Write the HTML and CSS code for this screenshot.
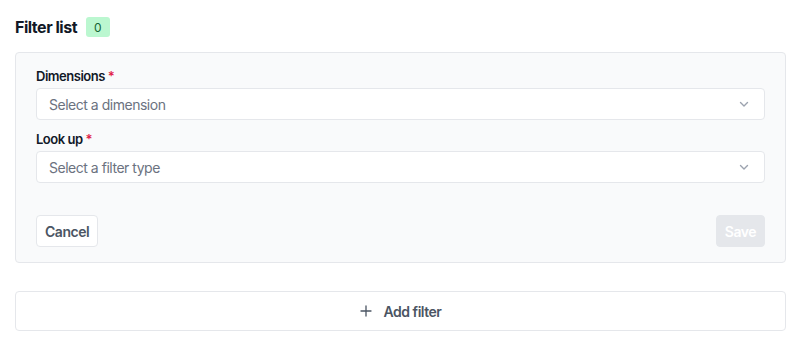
FILE: index.html
```html
<!DOCTYPE html>
<html>
<head>
<meta charset="utf-8">
<link rel="stylesheet" href="styles.css">
</head>
<body>
<div class="page">
  <div class="header">
    <h2 class="title">Filter list</h2>
    <span class="badge">0</span>
  </div>
  <div class="panel">
    <div class="field">
      <label class="label">Dimensions <span class="req">*</span></label>
      <div class="select">
        <span class="placeholder">Select a dimension</span>
        <svg class="chev" width="12" height="12" viewBox="0 0 12 12"><path d="M2.5 4.5 L6 8 L9.5 4.5" fill="none" stroke="#9ca3af" stroke-width="1.4" stroke-linecap="round" stroke-linejoin="round"/></svg>
      </div>
    </div>
    <div class="field">
      <label class="label">Look up <span class="req">*</span></label>
      <div class="select">
        <span class="placeholder">Select a filter type</span>
        <svg class="chev" width="12" height="12" viewBox="0 0 12 12"><path d="M2.5 4.5 L6 8 L9.5 4.5" fill="none" stroke="#9ca3af" stroke-width="1.4" stroke-linecap="round" stroke-linejoin="round"/></svg>
      </div>
    </div>
    <div class="actions">
      <button class="btn cancel">Cancel</button>
      <button class="btn save">Save</button>
    </div>
  </div>
  <button class="add">
    <svg width="12" height="12" viewBox="0 0 12 12"><path d="M6 1 V11 M1 6 H11" stroke="#4b5563" stroke-width="1.3" stroke-linecap="round"/></svg>
    <span>Add filter</span>
  </button>
</div>
</body>
</html>
```

FILE: styles.css
```css
* { box-sizing: border-box; }
body {
  margin: 0;
  background: #ffffff;
  font-family: Inter, "Noto Sans", sans-serif;
  letter-spacing: -0.03em;
  color: #111827;
}
.page {
  padding: 15px 19px 0 15px;
}
.header {
  display: flex;
  align-items: center;
  gap: 9px;
  height: 24px;
}
.title {
  margin: 0;
  font-size: 16px;
  font-weight: 700;
  line-height: 24px;
  color: #111827;
}
.badge {
  display: inline-flex;
  align-items: center;
  justify-content: center;
  height: 20px;
  min-width: 23px;
  padding: 0 8px;
  border-radius: 3px;
  background: #bbf7d0;
  color: #166534;
  font-size: 12px;
  font-weight: 400;
  letter-spacing: 0;
}
.panel {
  margin-top: 13px;
  background: #f9fafb;
  border: 1px solid #e5e7eb;
  border-radius: 4px;
  padding: 16px 20px 15px 20px;
  display: flex;
  flex-direction: column;
  gap: 12px;
}
.field {
  display: flex;
  flex-direction: column;
  gap: 4px;
}
.label {
  font-size: 13px;
  font-weight: 600;
  line-height: 15px;
  color: #111827;
}
.req { color: #e11d48; }
.select {
  height: 32px;
  background: #ffffff;
  border: 1px solid #e5e7eb;
  border-radius: 4px;
  display: flex;
  align-items: center;
  justify-content: space-between;
  padding: 0 14px 0 12px;
}
.placeholder {
  font-size: 14px;
  color: #6b7280;
}
.chev { display: block; }
.actions {
  margin-top: 20px;
  display: flex;
  justify-content: space-between;
}
.btn {
  height: 32px;
  padding: 0 8px;
  border-radius: 4px;
  font-family: inherit;
  letter-spacing: inherit;
  font-size: 14px;
  font-weight: 600;
}
.cancel {
  background: #ffffff;
  border: 1px solid #e5e7eb;
  color: #4b5563;
}
.save {
  background: #e5e7eb;
  border: 1px solid #e5e7eb;
  color: #ffffff;
}
.add {
  margin-top: 28px;
  width: 100%;
  height: 40px;
  background: #ffffff;
  border: 1px solid #e5e7eb;
  border-radius: 4px;
  display: flex;
  align-items: center;
  justify-content: center;
  gap: 12px;
  font-family: inherit;
  letter-spacing: inherit;
  font-size: 14px;
  font-weight: 600;
  color: #4b5563;
}
.add svg { display: block; }
```
